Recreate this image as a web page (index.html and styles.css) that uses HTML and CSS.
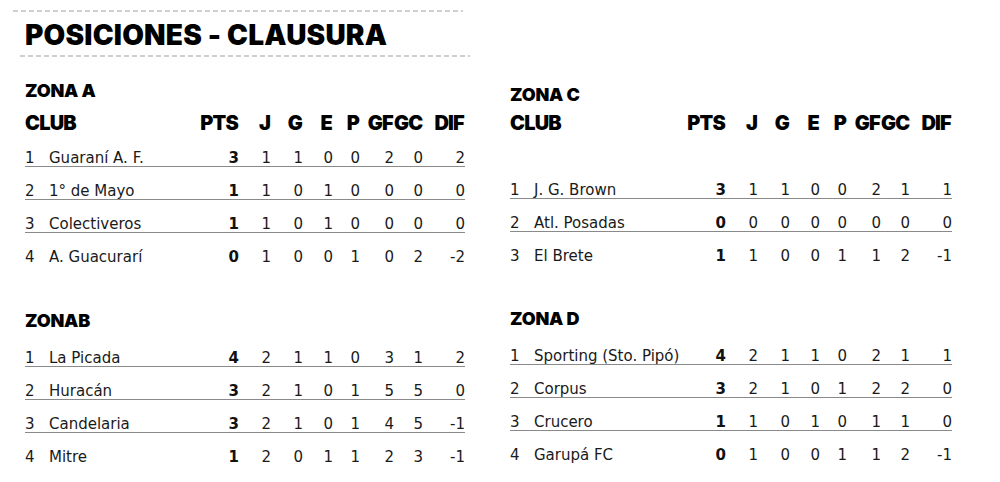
FILE: index.html
```html
<!DOCTYPE html>
<html lang="es">
<head>
<meta charset="utf-8">
<title>Posiciones - Clausura</title>
<link rel="stylesheet" href="styles.css">
</head>
<body>
<div class="page">
  <div class="col col-left">
    <div class="dash dash-top"></div>
    <h1 class="title">POSICIONES - CLAUSURA</h1>
    <div class="dash dash-bottom"></div>

    <section class="zone zone-a">
      <h2 class="zone-title">ZONA A</h2>
      <div class="row head"><span class="club">CLUB</span><span>PTS</span><span>J</span><span>G</span><span>E</span><span>P</span><span>GF</span><span>GC</span><span>DIF</span></div>
      <div class="rows">
        <div class="row"><span class="pos">1</span><span class="name">Guaraní A. F.</span><span class="pts">3</span><span>1</span><span>1</span><span>0</span><span>0</span><span>2</span><span>0</span><span>2</span></div>
        <div class="row"><span class="pos">2</span><span class="name">1° de Mayo</span><span class="pts">1</span><span>1</span><span>0</span><span>1</span><span>0</span><span>0</span><span>0</span><span>0</span></div>
        <div class="row"><span class="pos">3</span><span class="name">Colectiveros</span><span class="pts">1</span><span>1</span><span>0</span><span>1</span><span>0</span><span>0</span><span>0</span><span>0</span></div>
        <div class="row"><span class="pos">4</span><span class="name">A. Guacurarí</span><span class="pts">0</span><span>1</span><span>0</span><span>0</span><span>1</span><span>0</span><span>2</span><span>-2</span></div>
      </div>
    </section>

    <section class="zone zone-b">
      <h2 class="zone-title">ZONAB</h2>
      <div class="rows">
        <div class="row"><span class="pos">1</span><span class="name">La Picada</span><span class="pts">4</span><span>2</span><span>1</span><span>1</span><span>0</span><span>3</span><span>1</span><span>2</span></div>
        <div class="row"><span class="pos">2</span><span class="name">Huracán</span><span class="pts">3</span><span>2</span><span>1</span><span>0</span><span>1</span><span>5</span><span>5</span><span>0</span></div>
        <div class="row"><span class="pos">3</span><span class="name">Candelaria</span><span class="pts">3</span><span>2</span><span>1</span><span>0</span><span>1</span><span>4</span><span>5</span><span>-1</span></div>
        <div class="row"><span class="pos">4</span><span class="name">Mitre</span><span class="pts">1</span><span>2</span><span>0</span><span>1</span><span>1</span><span>2</span><span>3</span><span>-1</span></div>
      </div>
    </section>
  </div>

  <div class="col col-right">
    <section class="zone zone-c">
      <h2 class="zone-title">ZONA C</h2>
      <div class="row head"><span class="club">CLUB</span><span>PTS</span><span>J</span><span>G</span><span>E</span><span>P</span><span>GF</span><span>GC</span><span>DIF</span></div>
      <div class="rows rows-gap">
        <div class="row"><span class="pos">1</span><span class="name">J. G. Brown</span><span class="pts">3</span><span>1</span><span>1</span><span>0</span><span>0</span><span>2</span><span>1</span><span>1</span></div>
        <div class="row"><span class="pos">2</span><span class="name">Atl. Posadas</span><span class="pts">0</span><span>0</span><span>0</span><span>0</span><span>0</span><span>0</span><span>0</span><span>0</span></div>
        <div class="row"><span class="pos">3</span><span class="name">El Brete</span><span class="pts">1</span><span>1</span><span>0</span><span>0</span><span>1</span><span>1</span><span>2</span><span>-1</span></div>
      </div>
    </section>

    <section class="zone zone-d">
      <h2 class="zone-title">ZONA D</h2>
      <div class="rows">
        <div class="row"><span class="pos">1</span><span class="name">Sporting (Sto. Pipó)</span><span class="pts">4</span><span>2</span><span>1</span><span>1</span><span>0</span><span>2</span><span>1</span><span>1</span></div>
        <div class="row"><span class="pos">2</span><span class="name">Corpus</span><span class="pts">3</span><span>2</span><span>1</span><span>0</span><span>1</span><span>2</span><span>2</span><span>0</span></div>
        <div class="row"><span class="pos">3</span><span class="name">Crucero</span><span class="pts">1</span><span>1</span><span>0</span><span>1</span><span>0</span><span>1</span><span>1</span><span>0</span></div>
        <div class="row"><span class="pos">4</span><span class="name">Garupá FC</span><span class="pts">0</span><span>1</span><span>0</span><span>0</span><span>1</span><span>1</span><span>2</span><span>-1</span></div>
      </div>
    </section>
  </div>
</div>
</body>
</html>
```

FILE: styles.css
```css
html, body {
  margin: 0;
  padding: 0;
  background: #ffffff;
}

.page {
  display: flex;
  gap: 45px;
  padding: 10px 0 0 25px;
  color: #111;
  font-family: "DejaVu Sans", Verdana, sans-serif;
}

.col-left { width: 440px; }
.col-right { width: 442px; }

.dash {
  height: 2px;
  width: 450px;
  background: repeating-linear-gradient(90deg, #cfcfcf 0 5px, transparent 5px 8px);
}
.dash-top { margin-left: -12px; }
.dash-bottom { margin-left: -5px; margin-top: 4px; }

.title {
  margin: 7px 0 0 0;
  font-family: Inter, "Liberation Sans", sans-serif;
  font-weight: 900;
  font-size: 28px;
  line-height: 32px;
  letter-spacing: 0.2px;
  color: #000;
}

.zone-title {
  margin: 0;
  font-family: Inter, "Liberation Sans", sans-serif;
  font-weight: 900;
  font-size: 18px;
  line-height: 20px;
  letter-spacing: -0.2px;
  color: #000;
}

.zone-a { margin-top: 24px; }
.zone-b { margin-top: 45px; }
.zone-b .rows { margin-top: 3px; }

.zone-c { margin-top: 75px; }
.zone-d { margin-top: 44px; }
.zone-d .rows { margin-top: 3px; }

.row {
  display: grid;
  grid-template-columns: 24px 1fr 40px 32px 32px 30px 27px 34px 29px 42px;
  align-items: end;
}

.row > span { text-align: right; }
.row > .pos, .row > .name { text-align: left; }

.head {
  margin-top: 11px;
  font-family: Inter, "Liberation Sans", sans-serif;
  font-weight: 900;
  font-size: 20px;
  line-height: 22px;
  letter-spacing: -0.8px;
  color: #000;
}
.zone-c .head { margin-top: 7px; }
.head > span { padding-right: 1px; }
.head > .club { grid-column: 1 / 3; text-align: left; }

.rows-gap { margin-top: 32px; }

.rows .row {
  height: 15px;
  padding-top: 17px;
  font-size: 15px;
  line-height: 15px;
  color: #1a1a1a;
  border-bottom: 1px solid #8a8a8a;
}
.rows .row:last-child { border-bottom-color: transparent; }

.name { white-space: nowrap; }
.pts { font-weight: 700; color: #111; }
```
